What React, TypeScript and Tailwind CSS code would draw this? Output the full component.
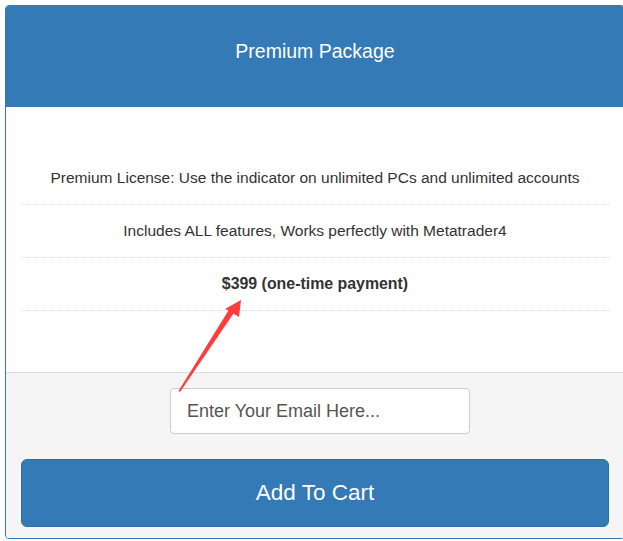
export default function App() {
  const rows = [
    { text: "Premium License: Use the indicator on unlimited PCs and unlimited accounts", bold: false },
    { text: "Includes ALL features, Works perfectly with Metatrader4", bold: false },
    { text: "$399 (one-time payment)", bold: true },
  ]

  return (
    <div className="relative min-h-[541px] bg-white pl-[5px] pt-[5px] font-['Liberation_Sans',Arial,sans-serif] text-[#333]">
      <div className="w-[620px] overflow-hidden rounded-[4px] border border-[#337ab7]">
        {/* Header */}
        <div className="h-[101px] bg-[#337ab7] pt-[34px] text-center text-[19.5px] leading-[22px] text-white">
          Premium Package
        </div>

        {/* Feature list */}
        <ul className="bg-white px-[15px] pb-[61px] pt-[45px]">
          {rows.map((row) => (
            <li
              key={row.text}
              className={`border-b border-dotted border-[#ddd] py-[15px] text-center leading-[22px] ${row.bold ? "text-[15.9px] font-bold" : "text-[15.5px]"}`}
            >
              {row.text}
            </li>
          ))}
        </ul>

        {/* Footer */}
        <div className="border-t border-[#ddd] bg-[#f5f5f5] px-[15px] pb-[11px] pt-[15px]">
          <div className="flex justify-center pl-[10px]">
            <input
              type="email"
              placeholder="Enter Your Email Here..."
              className="h-[46px] w-[300px] rounded-[4px] border border-[#ccc] bg-white px-[16px] text-[18px] text-[#555] outline-none placeholder:text-[#555]"
            />
          </div>
          <button className="mt-[25px] h-[68px] w-full rounded-[6px] border border-[#2e6da4] bg-[#337ab7] text-[22.5px] text-white">
            Add To Cart
          </button>
        </div>
      </div>

      {/* Red annotation arrow */}
      <svg className="pointer-events-none absolute left-0 top-0" width="623" height="541">
        <polygon
          points="241,300 239,317 233.5,313.5 180,392 178.5,391 228.5,310.5 225,309"
          fill="#ff3b3b"
        />
      </svg>
    </div>
  )
}
